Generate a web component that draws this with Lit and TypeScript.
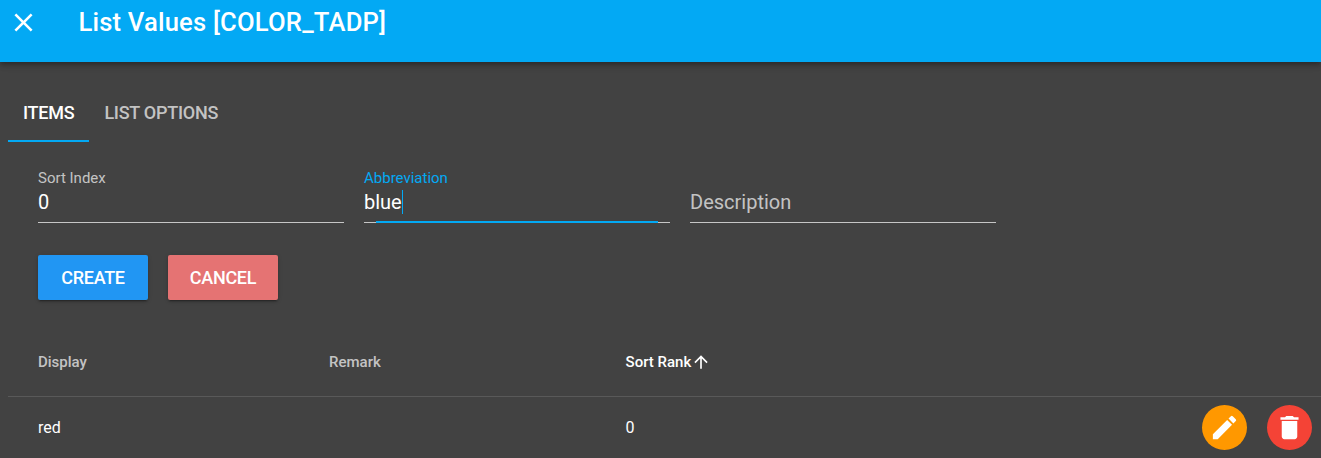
import { LitElement, html, css } from "lit";
import { customElement } from "lit/decorators.js";

@customElement("app-root")
export class AppRoot extends LitElement {
  static styles = css`
    :host {
      display: block;
      width: 1321px;
      height: 458px;
      overflow: hidden;
      background: #424242;
      font-family: Roboto, "Liberation Sans", sans-serif;
      color: #fff;
    }
    .toolbar {
      position: relative;
      z-index: 1;
      height: 62px;
      background: #03a9f4;
      box-shadow: 0 2px 4px -1px rgba(0,0,0,.2), 0 4px 5px 0 rgba(0,0,0,.14), 0 1px 10px 0 rgba(0,0,0,.12);
      display: flex;
      align-items: flex-start;
      box-sizing: border-box;
      padding: 7px 0 0 8px;
    }
    .close { width: 31px; height: 31px; fill: #fff; display: block; flex: none; }
    .title {
      margin: 3px 0 0 39.4px;
      font-size: 25.6px;
      font-weight: 500;
      line-height: 24px;
      letter-spacing: 0.2px;
      white-space: nowrap;
    }
    .tabs {
      display: flex;
      height: 58px;
      margin-top: 22px;
      padding-left: 8px;
    }
    .tab {
      box-sizing: border-box;
      height: 58px;
      padding: 1px 15px 0;
      display: flex;
      align-items: center;
      font-size: 18px;
      font-weight: 500;
      color: rgba(255,255,255,.7);
      border-bottom: 2px solid transparent;
      letter-spacing: -0.25px;
    }
    .tab.on { color: #fff; border-bottom-color: #03a9f4; }
    .fields {
      display: flex;
      gap: 20px;
      padding: 28px 0 0 38px;
    }
    .field {
      position: relative;
      box-sizing: border-box;
      width: 306px;
      height: 53px;
      border-bottom: 1px solid rgba(255,255,255,.7);
    }
    .label {
      font-size: 15px;
      line-height: 17px;
      color: rgba(255,255,255,.7);
    }
    .label.focus { color: #03a9f4; }
    .value {
      font-size: 20px;
      line-height: 24px;
      margin-top: 3px;
      display: flex;
      align-items: center;
    }
    .caret { width: 1px; height: 24px; background: #03a9f4; }
    .placeholder {
      font-size: 20px;
      line-height: 24px;
      margin-top: 20px;
      color: rgba(255,255,255,.7);
    }
    .focusline {
      position: absolute;
      left: 12px;
      right: 12px;
      bottom: -1px;
      height: 2px;
      background: #03a9f4;
    }
    .buttons {
      display: flex;
      gap: 20px;
      padding: 32px 0 0 38px;
    }
    .btn {
      width: 110px;
      height: 45px;
      border-radius: 2px;
      display: flex;
      align-items: center;
      justify-content: center;
      font-size: 18px;
      font-weight: 500;
      letter-spacing: -0.3px;
      box-shadow: 0 3px 1px -2px rgba(0,0,0,.2), 0 2px 2px 0 rgba(0,0,0,.14), 0 1px 5px 0 rgba(0,0,0,.12);
    }
    .create { background: #2196f3; }
    .cancel { background: #e57373; }
    .table { margin: 33px 0 0 8px; }
    .row {
      display: grid;
      grid-template-columns: 291px 296.6px 1fr;
      align-items: center;
      box-sizing: border-box;
      padding-left: 30px;
    }
    .head {
      height: 64px;
      border-bottom: 1px solid rgba(255,255,255,.12);
      font-size: 15px;
      font-weight: 500;
      color: rgba(255,255,255,.7);
      padding-bottom: 6px;
    }
    .head .sorted { color: #fff; display: flex; align-items: center; }
    .arrow { width: 20px; height: 20px; fill: #fff; display: block; }
    .body {
      position: relative;
      height: 62px;
      font-size: 16px;
      padding-bottom: 2px;
    }
    .fab {
      position: absolute;
      top: 8px;
      width: 45px;
      height: 45px;
      border-radius: 50%;
      display: flex;
      align-items: center;
      justify-content: center;
    }
    .fab svg { width: 31px; height: 31px; fill: #fff; display: block; }
    .edit { left: 1194px; background: #ff9800; }
    .del { left: 1259px; background: #f44336; }
  `;

  render() {
    return html`
      <div class="toolbar">
        <svg class="close" viewBox="0 0 24 24"><path d="M19 6.41 17.59 5 12 10.59 6.41 5 5 6.41 10.59 12 5 17.59 6.41 19 12 13.41 17.59 19 19 17.59 13.41 12z"/></svg>
        <div class="title">List Values [COLOR_TADP]</div>
      </div>
      <div class="tabs">
        <div class="tab on">ITEMS</div>
        <div class="tab">LIST OPTIONS</div>
      </div>
      <div class="fields">
        <div class="field">
          <div class="label">Sort Index</div>
          <div class="value">0</div>
        </div>
        <div class="field">
          <div class="label focus">Abbreviation</div>
          <div class="value">blue<span class="caret"></span></div>
          <div class="focusline"></div>
        </div>
        <div class="field">
          <div class="placeholder">Description</div>
        </div>
      </div>
      <div class="buttons">
        <div class="btn create">CREATE</div>
        <div class="btn cancel">CANCEL</div>
      </div>
      <div class="table">
        <div class="row head">
          <div>Display</div>
          <div>Remark</div>
          <div class="sorted">Sort Rank<svg class="arrow" viewBox="0 0 24 24"><path d="M4 12l1.41 1.41L11 7.83V20h2V7.83l5.58 5.59L20 12l-8-8-8 8z"/></svg></div>
        </div>
        <div class="row body">
          <div>red</div>
          <div></div>
          <div>0</div>
          <div class="fab edit"><svg viewBox="0 0 24 24"><path d="M3 17.25V21h3.75L17.81 9.94l-3.75-3.75L3 17.25zM20.71 7.04a1 1 0 0 0 0-1.41l-2.34-2.34a1 1 0 0 0-1.41 0l-1.83 1.83 3.75 3.75 1.83-1.83z"/></svg></div>
          <div class="fab del"><svg viewBox="0 0 24 24"><path d="M6 19c0 1.1.9 2 2 2h8c1.1 0 2-.9 2-2V7H6v12zM19 4h-3.5l-1-1h-5l-1 1H5v2h14V4z"/></svg></div>
        </div>
      </div>
    `;
  }
}
